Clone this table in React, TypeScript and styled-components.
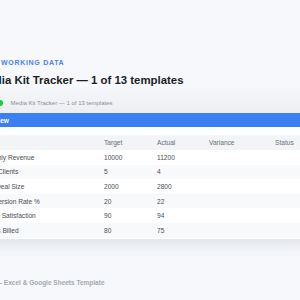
import React from 'react'
import styled, { createGlobalStyle } from 'styled-components'

const GlobalStyle = createGlobalStyle`
  html, body {
    margin: 0;
    padding: 0;
    background: #f6f8fb;
    overflow: hidden;
  }
  body {
    font-family: "Liberation Sans", Arial, sans-serif;
  }
`

const Page = styled.div`
  display: flex;
  justify-content: center;
  width: 300px;
  height: 300px;
  padding-top: 58px;
  box-sizing: border-box;
`

const Wrapper = styled.div`
  flex: 0 0 356px;
  width: 356px;
  display: flex;
  flex-direction: column;
`

const Eyebrow = styled.div`
  padding-left: 8px;
  font-size: 7px;
  line-height: 10px;
  font-weight: 700;
  letter-spacing: 0.1em;
  color: #4a84e8;
  white-space: nowrap;
`

const Title = styled.h1`
  margin: 5px 0 0;
  padding-left: 7px;
  font-size: 11.4px;
  line-height: 14px;
  font-weight: 700;
  color: #1b1e26;
  white-space: nowrap;
`

const Card = styled.div`
  margin-top: 6px;
  background: #ffffff;
  border-radius: 6px;
  overflow: hidden;
  box-shadow: 0 6px 14px rgba(30, 40, 60, 0.1);
  padding-bottom: 1.5px;
`

const WindowBar = styled.div`
  height: 20px;
  display: flex;
  align-items: center;
  padding: 0 9px;
  background: linear-gradient(#f4f5f8, #eceef2);
`

const Dot = styled.span<{ color: string }>`
  width: 5.5px;
  height: 5.5px;
  border-radius: 50%;
  background: ${({ color }) => color};
  margin-right: 2.5px;
  flex: none;
`

const WindowTitle = styled.span`
  margin-left: 5.5px;
  font-size: 6px;
  color: #8a8e96;
  white-space: nowrap;
`

const SectionBar = styled.div`
  height: 14px;
  display: flex;
  align-items: center;
  padding-left: 8px;
  background: #3b80f2;
  color: #ffffff;
  font-size: 6.5px;
  font-weight: 700;
`

const Table = styled.div`
  margin-top: 8px;
`

const Row = styled.div<{ head?: boolean; shade?: boolean }>`
  display: grid;
  grid-template-columns: 121px 53px 52px 66px 1fr;
  height: ${({ head }) => (head ? '15px' : '14.6px')};
  align-items: center;
  background: ${({ head, shade }) => (head ? '#f2f4f7' : shade ? '#f8f9fb' : '#ffffff')};
  font-size: 6.6px;
  color: ${({ head }) => (head ? '#6a6e76' : '#4a4d54')};
`

const Cell = styled.div`
  padding-left: 11px;
  white-space: nowrap;
`

const Footer = styled.div`
  margin-top: 39px;
  padding-left: 8px;
  font-size: 6.5px;
  line-height: 10px;
  font-weight: 700;
  color: #a4a8b1;
  white-space: nowrap;
`

const rows = [
  ['Monthly Revenue', '10000', '11200'],
  ['New Clients', '5', '4'],
  ['Avg Deal Size', '2000', '2800'],
  ['Conversion Rate %', '20', '22'],
  ['Client Satisfaction', '90', '94'],
  ['Hours Billed', '80', '75'],
]

const App: React.FC = () => (
  <>
    <GlobalStyle />
    <Page>
      <Wrapper>
        <Eyebrow>LIVE WORKING DATA</Eyebrow>
        <Title>Media Kit Tracker — 1 of 13 templates</Title>
        <Card>
          <WindowBar>
            <Dot color="#ff5f57" />
            <Dot color="#febc2e" />
            <Dot color="#28c840" />
            <WindowTitle>Media Kit Tracker — 1 of 13 templates</WindowTitle>
          </WindowBar>
          <SectionBar>Overview</SectionBar>
          <Table>
            <Row head>
              <Cell />
              <Cell>Target</Cell>
              <Cell>Actual</Cell>
              <Cell>Variance</Cell>
              <Cell>Status</Cell>
            </Row>
            {rows.map(([label, target, actual], i) => (
              <Row key={label} shade={i % 2 === 1}>
                <Cell>{label}</Cell>
                <Cell>{target}</Cell>
                <Cell>{actual}</Cell>
                <Cell />
                <Cell />
              </Row>
            ))}
          </Table>
        </Card>
        <Footer>Free — Excel &amp; Google Sheets Template</Footer>
      </Wrapper>
    </Page>
  </>
)

export default App
